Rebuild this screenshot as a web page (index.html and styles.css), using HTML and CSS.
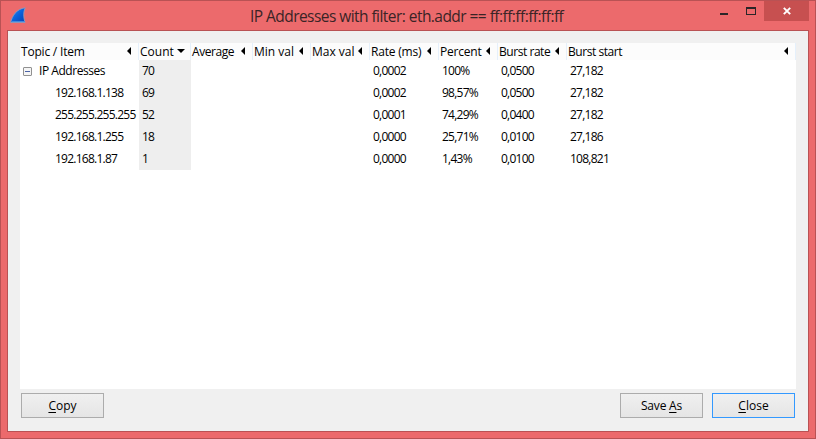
FILE: index.html
```
<!DOCTYPE html>
<html lang="en">
<head>
<meta charset="utf-8">
<title>IP Addresses with filter: eth.addr == ff:ff:ff:ff:ff:ff</title>
<link rel="stylesheet" href="styles.css">
</head>
<body>
<div class="window">
  <header class="titlebar">
    <svg class="fin" width="17" height="17" viewBox="0 0 17 17">
      <defs><linearGradient id="fin" x1="0" y1="0" x2="1" y2="1"><stop offset="0" stop-color="#2d8cf0"/><stop offset=".5" stop-color="#0b62dc"/><stop offset="1" stop-color="#0a3fae"/></linearGradient></defs>
      <path d="M.7 15.500C2 9 6.500 1.800 15.200.8C13.200 5 13.300 10 15 15.500Z" fill="url(#fin)" stroke="#8f9cc0" stroke-width=".9"/>
      <path d="M1.500 14.500H14.500" stroke="#3f8ae0"/>
    </svg>
    <h1 class="title">IP Addresses with filter: eth.addr == ff:ff:ff:ff:ff:ff</h1>
    <div class="controls">
      <svg class="glyphs" width="38" height="20" viewBox="0 0 38 20" shape-rendering="crispEdges"><path d="M2 12h8v2H2z" fill="#2b2528"/><path d="M28 6h10v8H28zM29 8v5h8V8z" fill="#2b2528" fill-rule="evenodd"/></svg>
      <div class="close"><svg width="8" height="8" viewBox="0 0 8 8"><path d="M.8.8l6.400 6.400M7.200.8L.8 7.200" stroke="#fff" stroke-width="1.900"/></svg></div>
    </div>
  </header>
  <main class="client">
    <section class="tree">
      <div class="row head">
        <div><span class="snug">Topic / Item</span><i class="left"></i></div><div><span>Count</span><i class="down"></i></div><div><span class="tight">Average</span><i class="left"></i></div><div><span>Min val</span><i class="left"></i></div><div><span>Max val</span><i class="left"></i></div><div><span class="snug">Rate (ms)</span><i class="left"></i></div><div><span class="snug">Percent</span><i class="left"></i></div><div><span class="tight">Burst rate</span><i class="left"></i></div><div><span class="tight">Burst start</span><i class="left"></i></div>
      </div>
      <div class="row root"><div><b class="toggle"></b><span class="tight">IP Addresses</span></div><div>70</div><div></div><div></div><div></div><div>0,0002</div><div>100%</div><div>0,0500</div><div>27,182</div></div>
      <div class="row"><div>192.168.1.138</div><div>69</div><div></div><div></div><div></div><div>0,0002</div><div>98,57%</div><div>0,0500</div><div>27,182</div></div>
      <div class="row"><div>255.255.255.255</div><div>52</div><div></div><div></div><div></div><div>0,0001</div><div>74,29%</div><div>0,0400</div><div>27,182</div></div>
      <div class="row"><div>192.168.1.255</div><div>18</div><div></div><div></div><div></div><div>0,0000</div><div>25,71%</div><div>0,0100</div><div>27,186</div></div>
      <div class="row"><div>192.168.1.87</div><div>1</div><div></div><div></div><div></div><div>0,0000</div><div>1,43%</div><div>0,0100</div><div>108,821</div></div>
    </section>
    <footer class="actions">
      <button class="copy"><span><u>C</u>opy</span></button>
      <button><span class="snug">Save <u>A</u>s</span></button>
      <button class="primary"><span><u>C</u>lose</span></button>
    </footer>
  </main>
</div>
</body>
</html>
```
FILE: styles.css
```
* { box-sizing: border-box; }
body { margin: 0; font: 12px/16px "Open Sans", "Noto Sans", sans-serif; color: #000; }
.window { width: 816px; height: 439px; background: #ec6a6c; border: 1px solid #b95254; display: flex; flex-direction: column; padding: 0 6px 6px; }
.titlebar { height: 29px; flex: none; display: grid; grid-template-columns: 243px 1fr 100px; align-items: start; }
.fin { margin: 6px 0 0 3px; }
.title { margin: 4px 0 0; font-size: 15.5px; line-height: 22px; font-weight: 400; color: #3a2426; white-space: nowrap; letter-spacing: -.55px; }
.controls { display: flex; justify-content: flex-end; height: 20px; }
.glyphs { flex: none; margin-right: 8px; }
.close { width: 45px; height: 20px; flex: none; background: #c75050; display: flex; align-items: center; justify-content: center; }
.client { flex: 1; border: 1px solid #b95254; background: #f0f0f0; padding: 12px 12px 0; display: flex; flex-direction: column; }
.tree { height: 346px; background: #fff; }
.row { display: grid; grid-template-columns: 119px 52px 62px 58px 59px 69px 59px 69px 229px; height: 22px; line-height: 22px; white-space: nowrap; letter-spacing: -.75px; }
.row > div { padding-left: 3px; }
.row > div:first-child { padding-left: 35px; }
.row > div:nth-child(2) { background: #eee; }
.row.root > div:first-child { padding-left: 3px; display: flex; align-items: center; }
.toggle { width: 9px; height: 9px; border: 1px solid #919191; border-radius: 1px; margin-right: 7px; background: linear-gradient(#4b63a7, #4b63a7) center / 5px 1px no-repeat #f5f5f5; }
.row.head { height: 17px; line-height: 17px; border-bottom: 1px solid #e8f0fa; letter-spacing: 0; }
.row.head > div, .row.head > div:first-child, .row.head > div:nth-child(2) { padding: 0 7px 0 1px; display: flex; justify-content: space-between; background: #fcfcfc; border-right: 1px solid #e5f0fb; }
.row.head > div:nth-child(2) { padding-right: 5px; }
.snug { letter-spacing: -.2px; }
.tight { letter-spacing: -.45px; }
.left { flex: none; margin-top: 4px; width: 4px; height: 8px; background: #000; clip-path: polygon(0 50%, 100% 0, 100% 100%); }
.down { flex: none; margin-top: 6px; width: 8px; height: 4px; background: #000; clip-path: polygon(0 0, 100% 0, 50% 100%); }
.actions { display: flex; padding: 4px 1px 0; gap: 9px; }
button { width: 83px; height: 25px; padding: 0; border: 1px solid #acacac; background: linear-gradient(#f0f0f0, #e5e5e5); font: inherit; color: #000; }
.copy { margin-right: auto; }
.primary { border-color: #3399ff; }
u { text-underline-offset: 2px; }
```
